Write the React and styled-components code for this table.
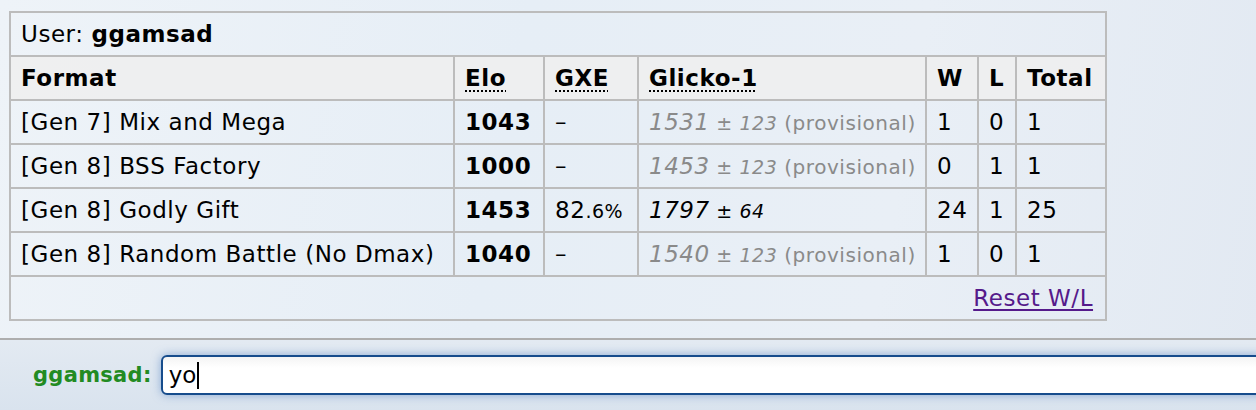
import React from 'react';
import styled, { createGlobalStyle } from 'styled-components';

const GlobalStyle = createGlobalStyle`
    html, body {
        margin: 0;
        padding: 0;
        height: 100%;
    }
    body {
        font-family: "DejaVu Sans", Verdana, sans-serif;
        background: linear-gradient(100deg, #eef3f8 0%, #e6eef6 40%, #e9eff6 70%, #e2e9f2 100%);
        color: #000;
    }
    #root {
        height: 100%;
    }
`;

const Page = styled.div`
    height: 410px;
    display: flex;
    flex-direction: column;
    overflow: hidden;
`;

const Log = styled.div`
    flex: 1;
    padding: 11px 0 0 9px;
`;

const RatingTable = styled.table`
    border-collapse: collapse;
    table-layout: fixed;
    width: 1097px;
    font-size: 23px;
    letter-spacing: 0.55px;
    border: 2px solid #bcbcbc;
`;

const Cell = styled.td`
    border: 2px solid #bcbcbc;
    padding: 0 0 0 10px;
    height: 42px;
    white-space: nowrap;
    text-align: ${p => (p.$right ? 'right' : 'left')};
    padding-right: ${p => (p.$right ? '12px' : '0')};
    font-weight: ${p => (p.$bold ? 'bold' : 'normal')};
    background: ${p => (p.$head ? 'rgba(238, 238, 238, 0.85)' : 'transparent')};
`;

const Abbr = styled.abbr`
    text-decoration: underline dotted;
    text-underline-offset: 4px;
    text-decoration-thickness: 2px;
    cursor: help;
`;

const Rating = styled.span`
    font-style: italic;
    color: ${p => (p.$provisional ? '#8a8a8a' : '#000')};
`;

const Small = styled.small`
    font-size: 19px;
`;

const Note = styled.small`
    font-size: 20px;
    color: #8a8a8a;
`;

const ResetLink = styled.a`
    color: #551a8b;
    text-decoration: underline;
    text-underline-offset: 3px;
`;

const ChatBar = styled.div`
    height: 72px;
    border-top: 2px solid #aeaeae;
    background: linear-gradient(180deg, #e3eaf2 0%, #d9e3ee 100%);
    display: flex;
    align-items: center;
    gap: 9px;
    padding-left: 33px;
    box-sizing: border-box;
`;

const ChatName = styled.label`
    color: #228b22;
    font-weight: bold;
    font-size: 21px;
    letter-spacing: 0.3px;
`;

const ChatInput = styled.div`
    flex: 1;
    height: 40px;
    box-sizing: border-box;
    margin-right: -10px;
    border: 2px solid #164c8c;
    border-radius: 6px;
    background: linear-gradient(180deg, #f4f4f4 0%, #ffffff 30%);
    box-shadow: 0 0 10px rgba(70, 120, 190, 0.55);
    font-size: 23px;
    display: flex;
    align-items: center;
    padding-left: 6px;
`;

const Caret = styled.span`
    display: inline-block;
    width: 2px;
    height: 27px;
    background: #000;
    margin-left: 1px;
`;

const stats = [
    { format: '[Gen 7] Mix and Mega', elo: 1043, gxe: null, r: 1531, rd: 123, prov: true, w: 1, l: 0, t: 1 },
    { format: '[Gen 8] BSS Factory', elo: 1000, gxe: null, r: 1453, rd: 123, prov: true, w: 0, l: 1, t: 1 },
    { format: '[Gen 8] Godly Gift', elo: 1453, gxe: ['82', '.6%'], r: 1797, rd: 64, prov: false, w: 24, l: 1, t: 25 },
    { format: '[Gen 8] Random Battle (No Dmax)', elo: 1040, gxe: null, r: 1540, rd: 123, prov: true, w: 1, l: 0, t: 1 }
];

const widths = [444, 90, 94, 288, 52, 38, 90];

const App = () => (
    <Page>
        <GlobalStyle />
        <Log>
            <RatingTable>
                <colgroup>
                    {widths.map((w, i) => (
                        <col key={i} style={{ width: w }} />
                    ))}
                </colgroup>
                <tbody>
                    <tr>
                        <Cell colSpan={7}>
                            User: <strong>ggamsad</strong>
                        </Cell>
                    </tr>
                    <tr>
                        <Cell $head $bold>Format</Cell>
                        <Cell $head $bold><Abbr title="Elo rating">Elo</Abbr></Cell>
                        <Cell $head $bold><Abbr title="user's percentage chance of winning a random battle">GXE</Abbr></Cell>
                        <Cell $head $bold><Abbr title="Glicko-1 rating system: rating±deviation">Glicko-1</Abbr></Cell>
                        <Cell $head $bold>W</Cell>
                        <Cell $head $bold>L</Cell>
                        <Cell $head $bold>Total</Cell>
                    </tr>
                    {stats.map(s => (
                        <tr key={s.format}>
                            <Cell>{s.format}</Cell>
                            <Cell $bold>{s.elo}</Cell>
                            <Cell>
                                {s.gxe ? (
                                    <>
                                        {s.gxe[0]}
                                        <Small>{s.gxe[1]}</Small>
                                    </>
                                ) : (
                                    '–'
                                )}
                            </Cell>
                            <Cell>
                                <Rating $provisional={s.prov}>
                                    {s.r}
                                    <Small> ± {s.rd}</Small>
                                </Rating>
                                {s.prov && <Note> (provisional)</Note>}
                            </Cell>
                            <Cell>{s.w}</Cell>
                            <Cell>{s.l}</Cell>
                            <Cell>{s.t}</Cell>
                        </tr>
                    ))}
                    <tr>
                        <Cell colSpan={7} $right>
                            <ResetLink href="#">Reset W/L</ResetLink>
                        </Cell>
                    </tr>
                </tbody>
            </RatingTable>
        </Log>
        <ChatBar>
            <ChatName>ggamsad:</ChatName>
            <ChatInput>
                yo
                <Caret />
            </ChatInput>
        </ChatBar>
    </Page>
);

export default App;
